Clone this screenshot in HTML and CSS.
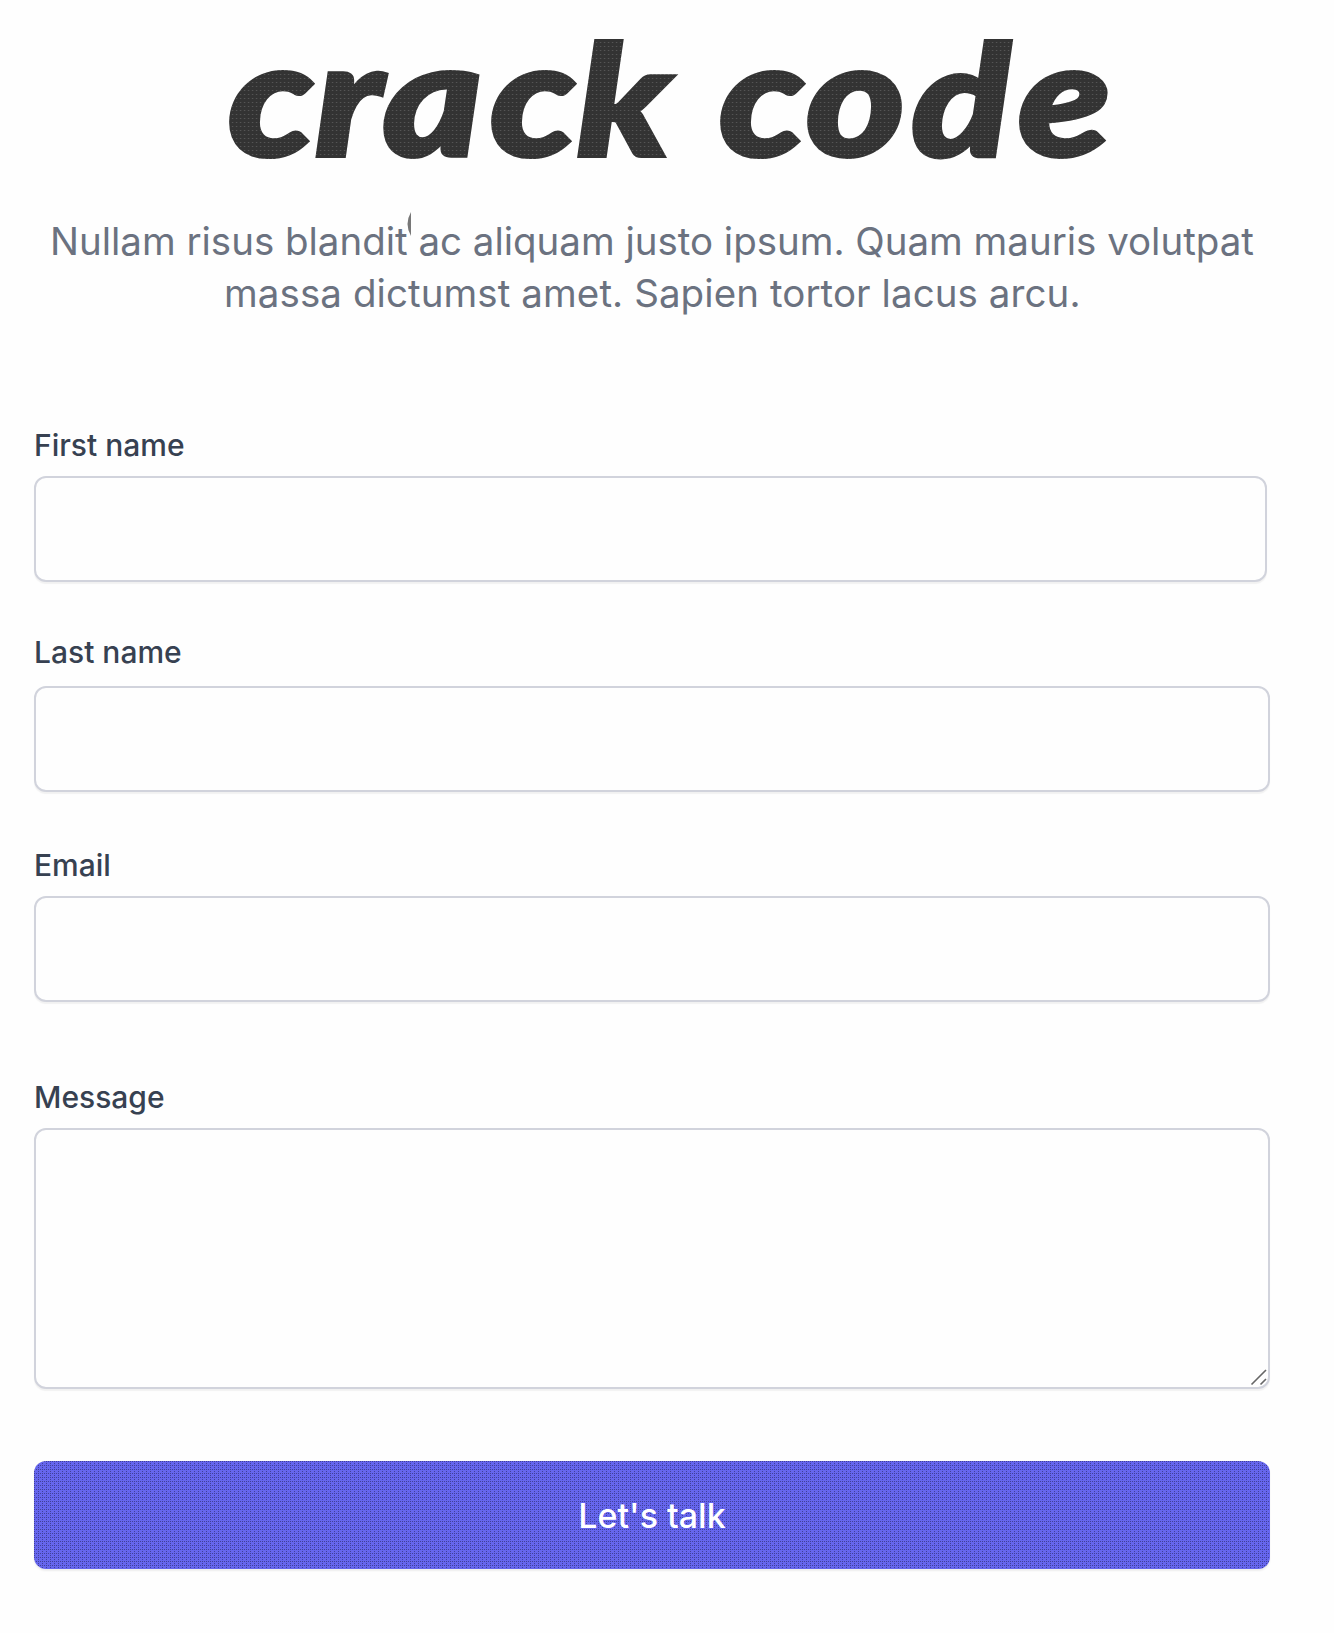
FILE: index.html
```html
<!DOCTYPE html>
<html lang="en">
<head>
<meta charset="utf-8">
<title>crack code</title>
<link rel="stylesheet" href="styles.css">
</head>
<body>
<main class="page">
  <h1 class="brand">
    <svg class="brand-logo" width="900" height="140" viewBox="0 0 900 140" role="img" aria-label="crack code">
      <defs>
        <pattern id="grain" width="4" height="4" patternUnits="userSpaceOnUse" patternTransform="scale(0.84746 1)">
          <rect width="4" height="4" fill="#333"/>
          <rect x="1" y="1" width="1" height="1" fill="#666"/>
        </pattern>
      </defs>
      <text class="brand-text" transform="scale(1.18 1)" y="131" x="4.2 78 135.6 226.3 300 375 420.3 494 583.5 673.7" fill="url(#grain)" stroke="url(#grain)">crac<tspan class="tall">k</tspan> co<tspan class="tall">d</tspan>e</text>
    </svg>
  </h1>
  <p class="intro">
    <span class="intro-line first">Nullam risus blandit<svg class="mark" width="4" height="24" viewBox="0 0 4 24"><path d="M4 0Q-3 12 4 24Z" fill="#777"/></svg> ac aliquam justo ipsum. Quam mauris volutpat</span>
    <span class="intro-line second">massa dictumst amet. Sapien tortor lacus arcu.</span>
  </p>
  <form class="form">
    <div class="field first-name">
      <label class="label" for="first">First name</label>
      <input class="control" id="first" type="text">
    </div>
    <div class="field last-name">
      <label class="label" for="last">Last name</label>
      <input class="control" id="last" type="text">
    </div>
    <div class="field email">
      <label class="label" for="email">Email</label>
      <input class="control" id="email" type="email">
    </div>
    <div class="field message">
      <label class="label" for="message">Message</label>
      <textarea class="control area" id="message"></textarea>
      <svg class="grip" width="18" height="18" viewBox="0 0 18 18"><path d="M1.5 16.5L16 2M10.500 16.500L16 11" fill="none" stroke="#666" stroke-width="1.600"/></svg>
    </div>
    <button class="submit" type="button">Let's talk</button>
  </form>
</main>
</body>
</html>
```
FILE: styles.css
```css
* { box-sizing: border-box; }

body {
  margin: 0;
  background: #fefefe;
  font-family: Inter, "Liberation Sans", sans-serif;
}

.page {
  display: flex;
  flex-direction: column;
  width: 1334px;
  height: 1633px;
  padding: 25px 64px 0 34px;
}

.brand {
  height: 140px;
  margin: 0 0 0 189px;
}

.brand-logo {
  display: block;
  overflow: visible;
}

.brand-text {
  font-family: Lato, Inter, sans-serif;
  font-size: 160px;
  font-weight: 900;
  font-style: italic;
  stroke-width: 4px;
}

.tall { font-size: 154px; }

.intro {
  display: flex;
  flex-direction: column;
  height: 103px;
  margin: 51px 0 0;
  color: #6b7280;
  font-size: 38.5px;
  line-height: 51.500px;
  white-space: nowrap;
}

.intro-line {
  position: relative;
}

.first { margin-left: 16px; letter-spacing: -0.020px; }
.second { margin-left: 190px; letter-spacing: 0.080px; }

.mark {
  position: absolute;
  left: 357px;
  top: -4px;
}

.form {
  display: flex;
  flex-direction: column;
  margin-top: 107px;
}

.field {
  display: flex;
  flex-direction: column;
  position: relative;
  width: 1236px;
}

.first-name { width: 1233px; }

.label {
  height: 36px;
  margin-bottom: 13px;
  color: #374151;
  font-size: 30px;
  font-weight: 500;
  line-height: 36px;
}

.control {
  width: 100%;
  height: 106px;
  padding: 0 24px;
  border: 2px solid #d1d3dc;
  border-radius: 12px;
  background: #fefefe;
  box-shadow: 0 2px 1px rgba(0, 0, 0, 0.05);
  font: inherit;
  font-size: 32px;
  outline: none;
}

.first-name { padding-top: 1px; }
.last-name { margin-top: 52px; }
.last-name .label { margin-bottom: 16px; }
.email { margin-top: 55px; }
.message { margin-top: 77px; }

.area {
  height: 261px;
  resize: none;
}

.grip {
  position: absolute;
  right: 2px;
  bottom: 3px;
}

.submit {
  height: 108px;
  width: 1236px;
  margin-top: 72px;
  border: 0;
  border-radius: 12px;
  background-color: #6666ee;
  background-image:
    conic-gradient(from 270deg at 1px 1px, #40409a 90deg, transparent 0),
    conic-gradient(from 270deg at 1px 1px, #40409a 90deg, transparent 0);
  background-size: 2px 4px, 4px 4px;
  background-position: 0 0, 0 2px;
  box-shadow: 0 2px 2px rgba(0, 0, 0, 0.07);
  color: #fff;
  font-family: inherit;
  font-size: 34px;
  font-weight: 500;
}
```
